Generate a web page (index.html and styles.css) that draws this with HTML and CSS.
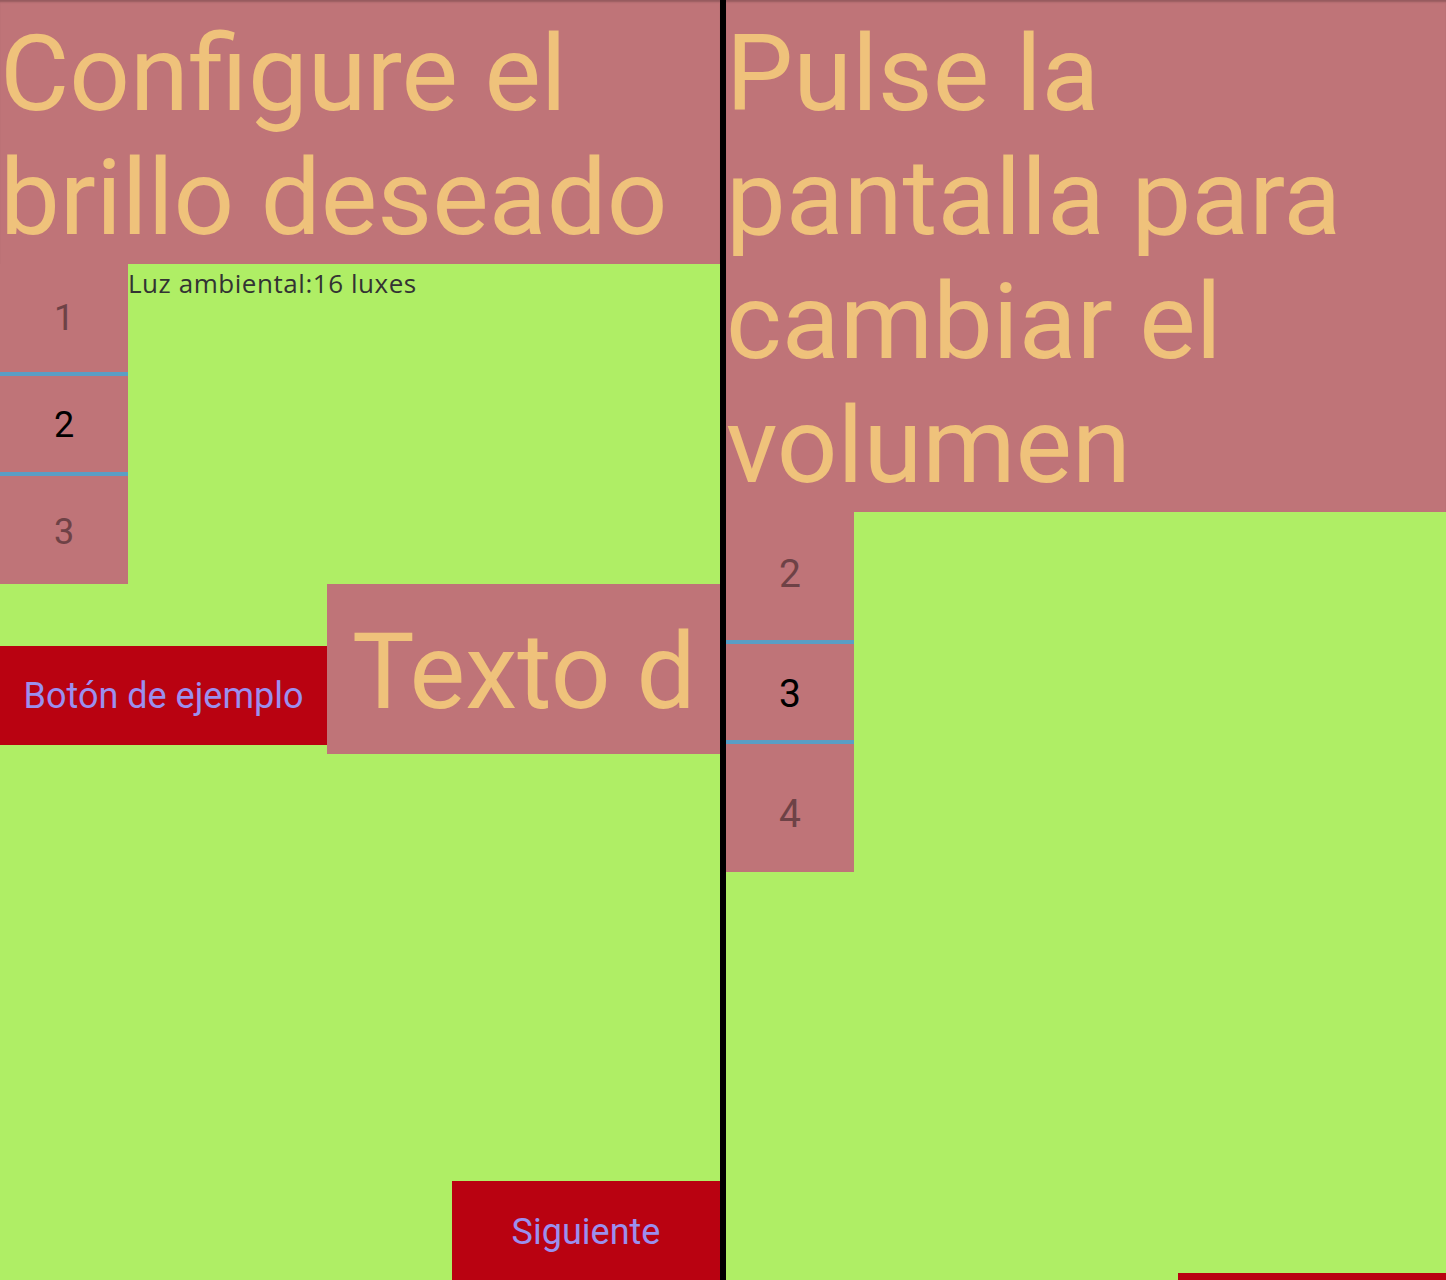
FILE: index.html
```html
<!DOCTYPE html>
<html lang="es">
<head>
<meta charset="utf-8">
<title>Configuración</title>
<link rel="stylesheet" href="styles.css">
</head>
<body>
<div class="screens">
  <section class="panel">
    <header class="title"><h1>Configure el brillo deseado</h1></header>
    <div class="picker-row">
      <div class="picker picker-small">
        <div class="cell cell-top muted">1</div>
        <div class="divider"></div>
        <div class="cell cell-mid">2</div>
        <div class="divider"></div>
        <div class="cell cell-bot muted">3</div>
      </div>
      <div class="sensor"><p class="lux">Luz ambiental:16 luxes</p></div>
    </div>
    <div class="sample-row">
      <div class="btn btn-sample">Botón de ejemplo</div>
      <div class="sample-text"><div class="sample-clip">Texto de ejemplo</div></div>
    </div>
    <div class="btn btn-next">Siguiente</div>
  </section>
  <div class="split"></div>
  <section class="panel">
    <header class="title"><h1>Pulse la pantalla para cambiar el volumen</h1></header>
    <div class="picker-row">
      <div class="picker picker-large">
        <div class="cell cell-top muted">2</div>
        <div class="divider"></div>
        <div class="cell cell-mid">3</div>
        <div class="divider"></div>
        <div class="cell cell-bot muted">4</div>
      </div>
      <div class="sensor"></div>
    </div>
    <div class="btn btn-next btn-next-low">Siguiente</div>
  </section>
</div>
</body>
</html>
```
FILE: styles.css
```css
html, body {
  margin: 0;
  padding: 0;
}
body {
  width: 1446px;
  height: 1280px;
  overflow: hidden;
  background: #000;
  font-family: Roboto, "Liberation Sans", sans-serif;
}
.screens {
  display: flex;
  height: 1280px;
}
.split {
  width: 6px;
  background: #000;
  flex: none;
}
.panel {
  width: 720px;
  height: 1280px;
  flex: none;
  background: #afee65;
  display: flex;
  flex-direction: column;
  overflow: hidden;
}
.title {
  background: #bf7478;
  padding: 12px 0 4px;
  box-shadow: inset 0 3px 2px -1px rgba(0, 0, 0, 0.22);
}
.title h1 {
  margin: 0;
  font-weight: 400;
  font-size: 106.5px;
  line-height: 124px;
  color: #efc27b;
}
.picker-row {
  display: flex;
}
.picker {
  width: 128px;
  flex: none;
  background: #bf7478;
  display: flex;
  flex-direction: column;
}
.cell {
  display: flex;
  align-items: center;
  justify-content: center;
  color: #000;
  box-sizing: border-box;
}
.cell.muted {
  color: #6e4246;
}
.divider {
  height: 4px;
  background: #5a9ec4;
}
.picker-small .cell {
  font-size: 36px;
}
.picker-small .cell-top { height: 108px; }
.picker-small .cell-mid { height: 96px; padding-top: 2px; }
.picker-small .cell-bot { height: 108px; padding-top: 4px; }
.picker-large .cell {
  font-size: 39px;
}
.picker-large .cell-top { height: 128px; padding-bottom: 5px; }
.picker-large .cell-mid { height: 96px; padding-top: 4px; }
.picker-large .cell-bot { height: 128px; padding-top: 12px; }
.sensor {
  flex: 1;
}
.lux {
  margin: 0;
  padding-top: 4px;
  font-family: "Open Sans", Roboto, sans-serif;
  font-size: 26px;
  letter-spacing: 0.55px;
  color: #333;
  line-height: 30px;
}
.sample-row {
  display: flex;
  align-items: baseline;
}
.btn {
  background: #b90211;
  color: #9b8fee;
  font-size: 36px;
  line-height: 42px;
  text-align: center;
  box-sizing: border-box;
  height: 99px;
  padding-top: 30px;
}
.btn-sample {
  width: 327px;
  flex: none;
  padding-top: 29px;
}
.sample-text {
  width: 393px;
  box-sizing: border-box;
  background: #bf7478;
  padding: 27px 25px 19px 25px;
}
.sample-clip {
  font-size: 105px;
  line-height: 124px;
  color: #efc27b;
  white-space: nowrap;
  overflow: hidden;
  width: 342px;
}
.btn-next {
  width: 268px;
  align-self: flex-end;
  margin-top: auto;
  flex: none;
}
.btn-next-low {
  margin-top: 401px;
}
```
